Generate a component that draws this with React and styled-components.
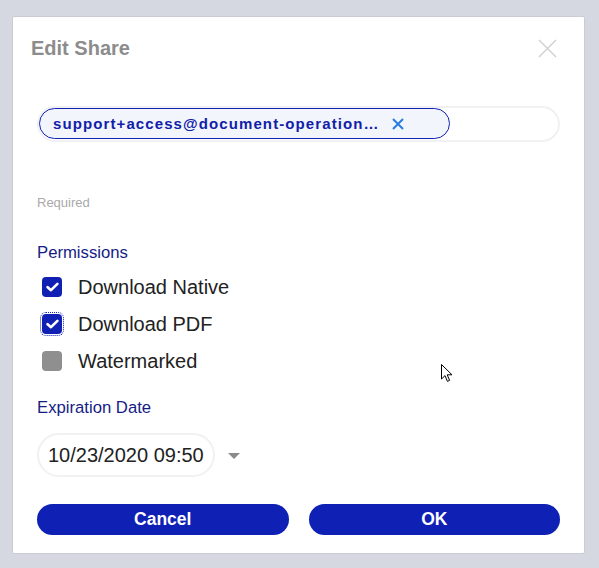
import React from 'react'
import styled, { createGlobalStyle } from 'styled-components'

const Global = createGlobalStyle`
  html, body {
    margin: 0;
    padding: 0;
    background: #d5d8e0;
    font-family: "Liberation Sans", Arial, sans-serif;
  }
`

const Page = styled.div`
  position: relative;
  width: 599px;
  height: 568px;
  padding: 16px 0 0 12px;
  box-sizing: border-box;
`

const Dialog = styled.div`
  width: 573px;
  height: 538px;
  box-sizing: border-box;
  background: #fff;
  border: 1px solid #c9ccd3;
  border-radius: 2px;
  display: flex;
  flex-direction: column;
  padding: 0 25px 0 24px;
`

const Header = styled.div`
  display: flex;
  justify-content: space-between;
  align-items: flex-start;
  box-sizing: border-box;
  height: 88.5px;
  padding-top: 18.5px;
  margin-left: -6px;
`

const Title = styled.h2`
  margin: 0;
  font-size: 20px;
  line-height: 24px;
  font-weight: 700;
  color: #8c8c8c;
`

const CloseBtn = styled.button`
  border: 0;
  background: none;
  padding: 0;
  margin: 3px 2px 0 0;
  width: 19px;
  height: 19px;
  cursor: pointer;
`

const EmailField = styled.div`
  height: 36px;
  box-sizing: border-box;
  border: 2px solid #f1f1f3;
  border-radius: 18px;
  display: flex;
  align-items: center;
  margin-right: -1px;
`

const Chip = styled.div`
  display: flex;
  align-items: center;
  width: 411px;
  height: 31px;
  box-sizing: border-box;
  background: #f2f5fb;
  border: 1px solid #1222b0;
  border-radius: 16px;
  padding: 0 0 0 13px;
`

const ChipText = styled.span`
  font-size: 15px;
  font-weight: 700;
  letter-spacing: 1.1px;
  color: #1020aa;
  white-space: nowrap;
  overflow: hidden;
  text-overflow: ellipsis;
  width: 326px;
`

const ChipRemove = styled.button`
  border: 0;
  background: none;
  padding: 0;
  margin-left: 12px;
  width: 14px;
  height: 14px;
  display: flex;
  cursor: pointer;
`

const Hint = styled.div`
  margin-top: 53.5px;
  font-size: 13px;
  line-height: 15px;
  color: #a9a9a9;
`

const SectionLabel = styled.div`
  margin-top: ${p => p.$top}px;
  font-size: 16.7px;
  line-height: 20px;
  color: #151c86;
`

const CheckList = styled.div`
  margin-top: 14px;
  display: flex;
  flex-direction: column;
  gap: 16px;
`

const CheckRow = styled.label`
  display: flex;
  align-items: center;
  gap: 16px;
  padding-left: 5px;
  height: 21px;
  font-size: 20px;
  color: #222;
`

const Box = styled.span`
  width: 20px;
  height: 20px;
  border-radius: 4px;
  box-sizing: border-box;
  display: flex;
  align-items: center;
  justify-content: center;
  background: ${p => (p.$checked ? '#1020b3' : '#8f8f8f')};
  outline: ${p => (p.$focused ? '1px dotted #1020b3' : 'none')};
  outline-offset: 1px;
`

const DateRow = styled.div`
  margin-top: 15.5px;
  display: flex;
  align-items: center;
  gap: 13px;
`

const DatePill = styled.div`
  width: 178px;
  height: 44px;
  box-sizing: border-box;
  border: 2px solid #f1f1f3;
  border-radius: 22px;
  display: flex;
  align-items: center;
  padding-left: 9px;
  font-size: 20px;
  color: #222;
`

const Caret = styled.span`
  width: 0;
  height: 0;
  border-left: 6px solid transparent;
  border-right: 6px solid transparent;
  border-top: 6px solid #8a8a8a;
  margin-top: 1px;
`

const Actions = styled.div`
  margin-top: 27px;
  display: flex;
  gap: 20px;
  margin-right: -1px;
`

const Button = styled.button`
  flex: 1;
  height: 31px;
  border: 0;
  border-radius: 16px;
  background: #0f20b5;
  color: #fff;
  font-family: "Liberation Sans", Arial, sans-serif;
  font-size: 17.5px;
  font-weight: 700;
  cursor: pointer;
`

const Pointer = styled.svg`
  position: absolute;
  left: 441px;
  top: 364px;
`

const Check = () => (
  <svg width="13" height="10" viewBox="0 0 13 10">
    <path d="M1.6 5.2 L5 8.2 L11.4 1.8" fill="none" stroke="#fff" strokeWidth="2.6" strokeLinecap="round" strokeLinejoin="round" />
  </svg>
)

export default function App() {
  const perms = [
    { label: 'Download Native', checked: true },
    { label: 'Download PDF', checked: true, focused: true },
    { label: 'Watermarked', checked: false },
  ]
  return (
    <Page>
      <Global />
      <Dialog>
        <Header>
          <Title>Edit Share</Title>
          <CloseBtn aria-label="Close">
            <svg width="19" height="19" viewBox="0 0 19 19">
              <path d="M1 1 L18 18 M18 1 L1 18" stroke="#cfcfcf" strokeWidth="1.4" />
            </svg>
          </CloseBtn>
        </Header>
        <EmailField>
          <Chip>
            <ChipText>support+access@document-operation...</ChipText>
            <ChipRemove aria-label="Remove">
              <svg width="14" height="14" viewBox="0 0 14 14">
                <path d="M2 2 L12 12 M12 2 L2 12" stroke="#2a7de0" strokeWidth="2" />
              </svg>
            </ChipRemove>
          </Chip>
        </EmailField>
        <Hint>Required</Hint>
        <SectionLabel $top={32.5}>Permissions</SectionLabel>
        <CheckList>
          {perms.map(p => (
            <CheckRow key={p.label}>
              <Box $checked={p.checked} $focused={p.focused}>{p.checked && <Check />}</Box>
              {p.label}
            </CheckRow>
          ))}
        </CheckList>
        <SectionLabel $top={26}>Expiration Date</SectionLabel>
        <DateRow>
          <DatePill>10/23/2020 09:50</DatePill>
          <Caret />
        </DateRow>
        <Actions>
          <Button>Cancel</Button>
          <Button>OK</Button>
        </Actions>
      </Dialog>
      <Pointer width="13" height="20" viewBox="0 0 13 20">
        <path d="M0.5 0.5 L0.5 15 L4 11.6 L6.4 17.4 L8.6 16.4 L6.2 10.8 L11 10.8 Z" fill="#fff" stroke="#000" strokeWidth="1" strokeLinejoin="round" />
      </Pointer>
    </Page>
  )
}
